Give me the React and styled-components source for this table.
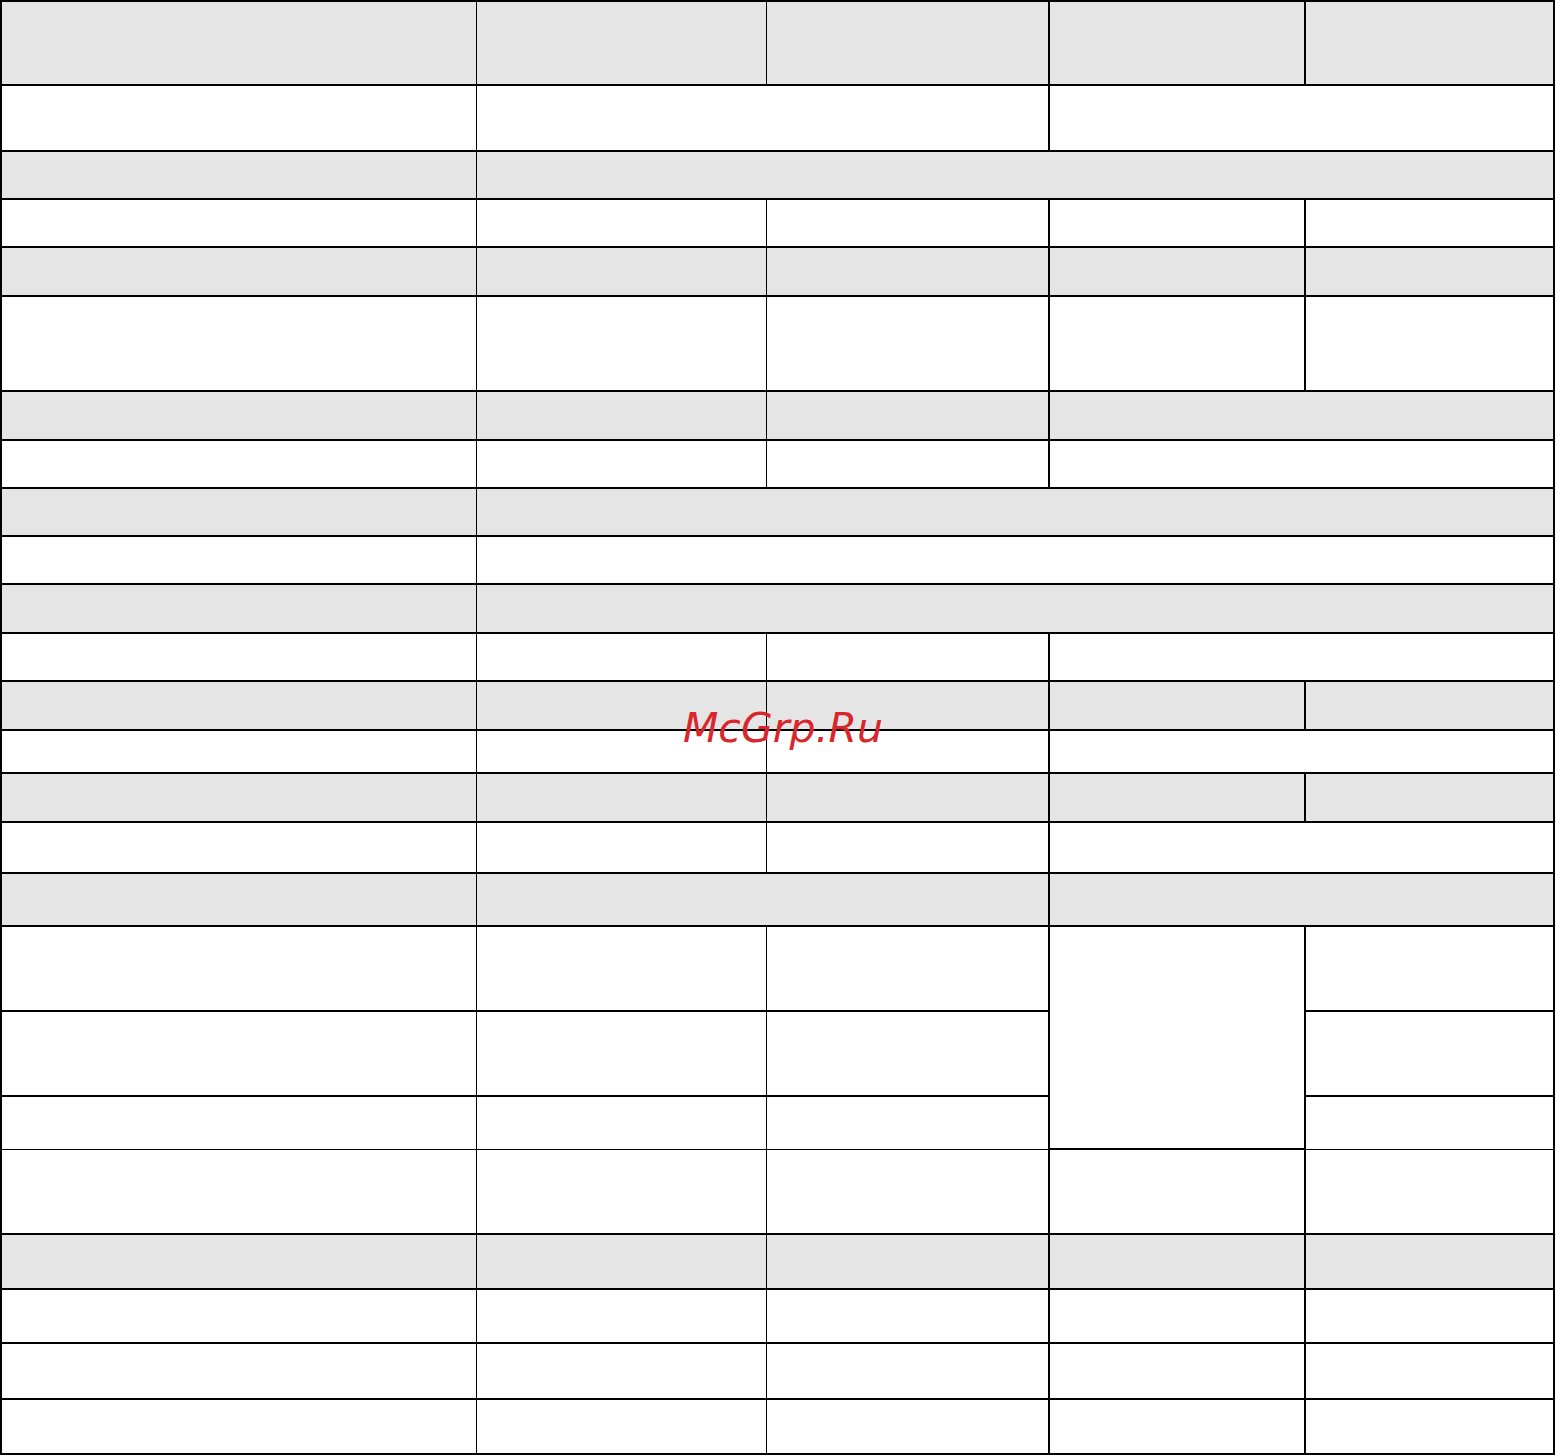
import React from "react";
import styled, { createGlobalStyle } from "styled-components";

const GlobalStyle = createGlobalStyle`
  html, body {
    margin: 0;
    padding: 0;
    background: #ffffff;
  }
  body {
    font-family: "DejaVu Sans", sans-serif;
  }
`;

const Page = styled.div`
  position: relative;
  width: 1555px;
`;

const Table = styled.table`
  width: 1555px;
  border-collapse: collapse;
  table-layout: fixed;
`;

const Row = styled.tr`
  height: ${(p) => p.$h}px;
  background: ${(p) => (p.$gray ? "#e5e5e5" : "#ffffff")};
`;

const Cell = styled.td`
  padding: 0;
  border-top: ${(p) => (p.$thinTop ? 1 : 2)}px solid #000;
  border-bottom: ${(p) => (p.$thinBottom ? 1 : 2)}px solid #000;
  border-left: ${(p) => (p.$thinLeft ? 1 : 2)}px solid #000;
  border-right: ${(p) => (p.$thinRight ? 1 : 2)}px solid #000;
`;

const Watermark = styled.div`
  position: absolute;
  left: 683px;
  top: 708px;
  font-family: "DejaVu Sans", sans-serif;
  font-style: italic;
  font-size: 41px;
  line-height: 41px;
  color: #d9262c;
  white-space: nowrap;
  pointer-events: none;
`;

// height, gray, cells ("start-end" or "start/rowspan"), thin line under the row
const layout = [
  [84, true, "1 2 3 4 5"],
  [66, false, "1 2-3 4-5"],
  [48, true, "1 2-5"],
  [48, false, "1 2 3 4 5"],
  [49, true, "1 2 3 4 5"],
  [95, false, "1 2 3 4 5"],
  [49, true, "1 2 3 4-5"],
  [48, false, "1 2 3 4-5"],
  [48, true, "1 2-5"],
  [48, false, "1 2-5"],
  [49, true, "1 2-5"],
  [48, false, "1 2 3 4-5"],
  [49, true, "1 2 3 4 5"],
  [43, false, "1 2 3 4-5"],
  [49, true, "1 2 3 4 5"],
  [51, false, "1 2 3 4-5"],
  [53, true, "1 2-3 4-5"],
  [85, false, "1 2 3 4/3 5"],
  [85, false, "1 2 3 5"],
  [53, false, "1 2 3 5", true],
  [85, false, "1 2 3 4 5"],
  [55, true, "1 2 3 4 5"],
  [54, false, "1 2 3 4 5"],
  [56, false, "1 2 3 4 5"],
  [55, false, "1 2 3 4 5"],
];

const colWidths = [475, 290, 283, 256, 249];

function parseCells(spec) {
  return spec.split(" ").map((token) => {
    let rowSpan = 1;
    let range = token;
    if (token.includes("/")) {
      [range, rowSpan] = token.split("/");
      rowSpan = Number(rowSpan);
    }
    const [a, b] = range.split("-").map(Number);
    return { start: a, end: b || a, rowSpan };
  });
}

export default function App() {
  return (
    <>
      <GlobalStyle />
      <Page>
        <Table>
          <colgroup>
            {colWidths.map((w, i) => (
              <col key={i} style={{ width: w }} />
            ))}
          </colgroup>
          <tbody>
            {layout.map(([h, gray, spec, thinUnder], r) => {
              const thinAbove = r > 0 && layout[r - 1][3];
              return (
                <Row key={r} $h={h} $gray={gray}>
                  {parseCells(spec).map((c) => (
                    <Cell
                      key={c.start}
                      colSpan={c.end - c.start + 1}
                      rowSpan={c.rowSpan}
                      $thinLeft={c.start === 2 || c.start === 3}
                      $thinRight={c.end === 1 || c.end === 2}
                      $thinTop={thinAbove && c.start !== 4}
                      $thinBottom={thinUnder}
                    />
                  ))}
                </Row>
              );
            })}
          </tbody>
        </Table>
        <Watermark>McGrp.Ru</Watermark>
      </Page>
    </>
  );
}
